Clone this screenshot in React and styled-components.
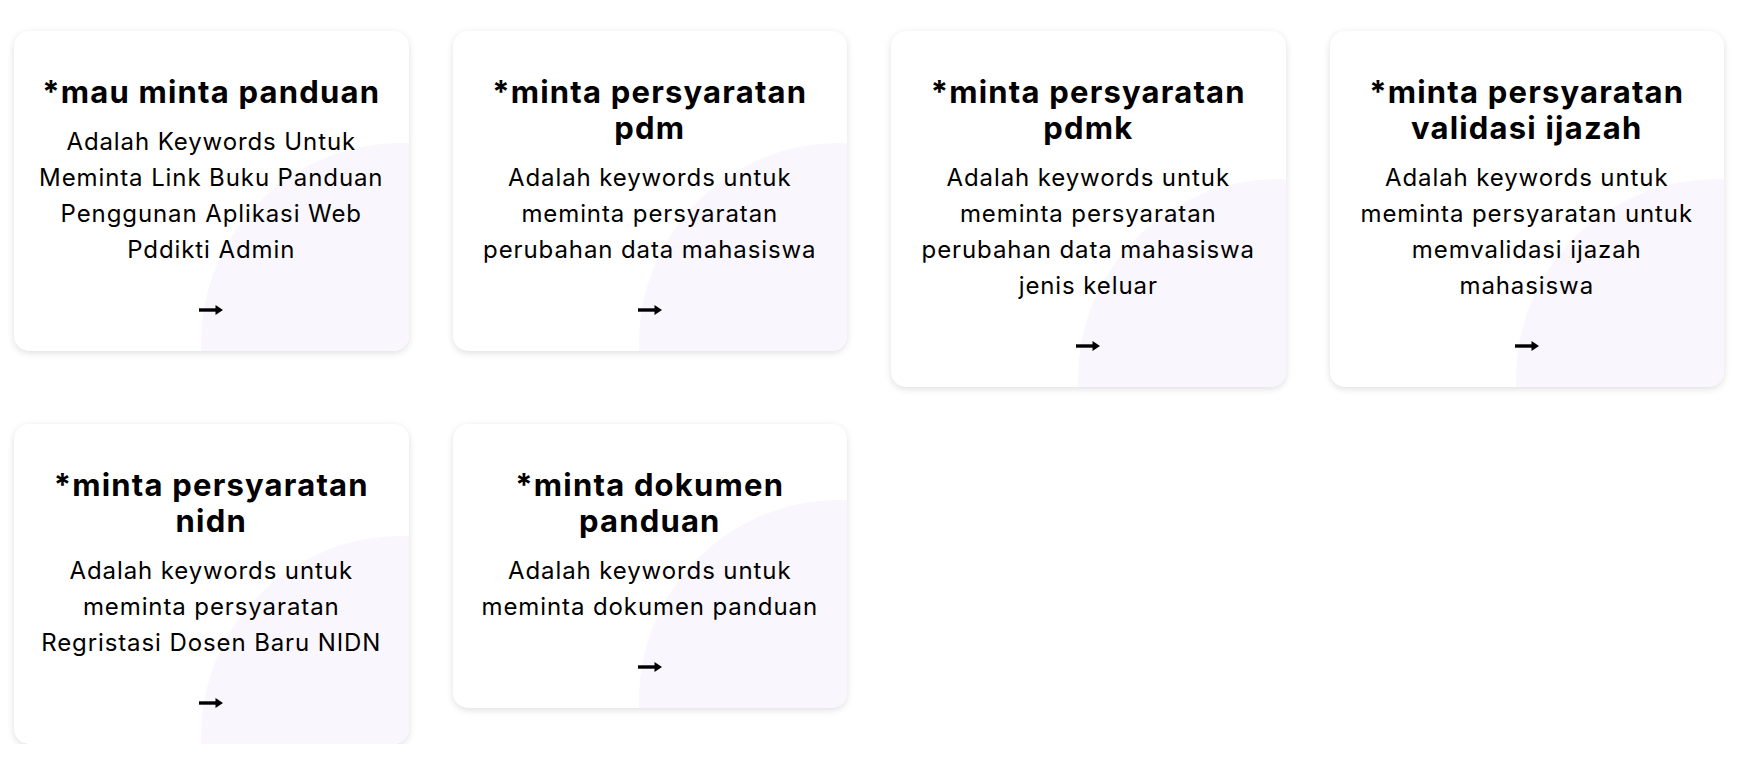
import React from 'react';
import styled, { createGlobalStyle } from 'styled-components';

const GlobalStyle = createGlobalStyle`
    body {
        margin: 0;
        background: #fff;
        font-family: Inter, "Open Sans", sans-serif;
        color: #000;
    }
`;

const Grid = styled.div`
    display: grid;
    grid-template-columns: repeat(4, 1fr);
    column-gap: 44px;
    row-gap: 37px;
    align-items: start;
    width: 1710px;
    padding: 31px 0 0 14px;
`;

const Card = styled.a`
    position: relative;
    display: block;
    overflow: hidden;
    isolation: isolate;
    padding: 43px 24px 35px;
    border-radius: 15px;
    background: #fff;
    box-shadow: 0 2px 7px rgba(0, 0, 0, 0.13);
    text-align: center;
    text-decoration: none;
    color: #000;

    &::before {
        content: '';
        position: absolute;
        z-index: -1;
        width: 400px;
        height: 400px;
        right: -192px;
        bottom: -192px;
        border-radius: 50%;
        background: #f9f7fd;
    }
`;

const Title = styled.h3`
    margin: 0 0 14px;
    font-size: 31px;
    line-height: 36px;
    font-weight: 700;
    letter-spacing: 1.2px;
`;

const Desc = styled.p`
    margin: 0;
    font-size: 24px;
    line-height: 36px;
    font-weight: 400;
    letter-spacing: 0.9px;
`;

const ArrowWrap = styled.div`
    display: flex;
    justify-content: center;
    margin-top: 36px;
    height: 12px;
`;

const Arrow = () => (
    <svg width="24" height="12" viewBox="0 0 24 12">
        <rect x="0" y="4.3" width="18" height="3.4" fill="#000" />
        <polygon points="16.5,1 24,6 16.5,11" fill="#000" />
    </svg>
);

const ITEMS = [
    {
        title: '*mau minta panduan',
        desc: 'Adalah Keywords Untuk Meminta Link Buku Panduan Penggunan Aplikasi Web Pddikti Admin',
    },
    {
        title: '*minta persyaratan pdm',
        desc: 'Adalah keywords untuk meminta persyaratan perubahan data mahasiswa',
    },
    {
        title: '*minta persyaratan pdmk',
        desc: 'Adalah keywords untuk meminta persyaratan perubahan data mahasiswa jenis keluar',
    },
    {
        title: '*minta persyaratan validasi ijazah',
        desc: 'Adalah keywords untuk meminta persyaratan untuk memvalidasi ijazah mahasiswa',
    },
    {
        title: '*minta persyaratan nidn',
        desc: 'Adalah keywords untuk meminta persyaratan Regristasi Dosen Baru NIDN',
    },
    {
        title: '*minta dokumen panduan',
        desc: 'Adalah keywords untuk meminta dokumen panduan',
    },
];

export default function App() {
    return (
        <React.Fragment>
            <GlobalStyle />
            <Grid>
                {ITEMS.map(item => (
                    <Card key={item.title} href="#">
                        <Title>{item.title}</Title>
                        <Desc>{item.desc}</Desc>
                        <ArrowWrap>
                            <Arrow />
                        </ArrowWrap>
                    </Card>
                ))}
            </Grid>
        </React.Fragment>
    );
}
